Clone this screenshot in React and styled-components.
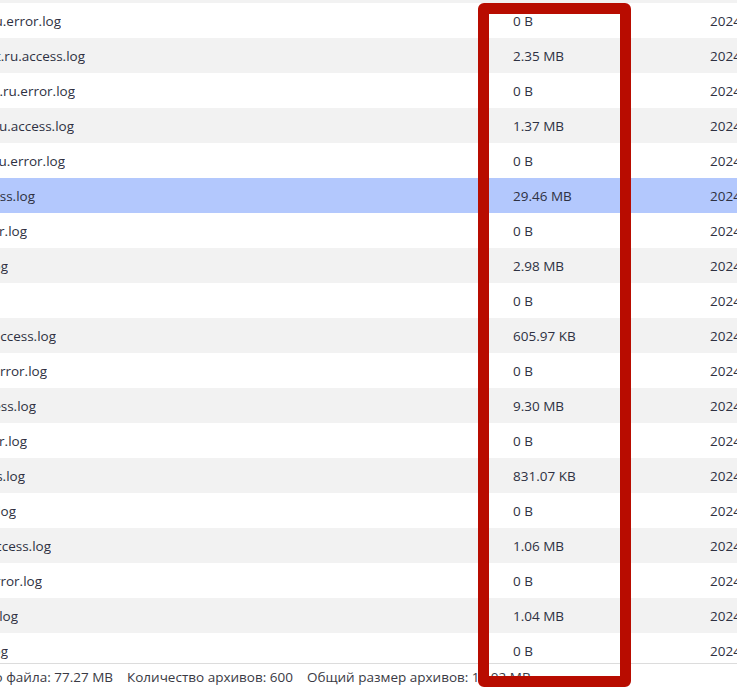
import { useEffect, useRef } from 'react';
import styled, { createGlobalStyle } from 'styled-components';

const logs = [
  { name: 'old-mirror.ru.access.log', end: 0, size: '1.12 MB', date: '2024-05-12 00:00' },
  { name: 'shop-mail.ru.error.log', end: 61, size: '0 B', date: '2024-05-12 00:00' },
  { name: 'market.ru.access.log', end: 85, size: '2.35 MB', date: '2024-05-12 00:00' },
  { name: 'market.ru.error.log', end: 75, size: '0 B', date: '2024-05-12 00:00' },
  { name: 'portal-edu.ru.access.log', end: 74, size: '1.37 MB', date: '2024-05-12 00:00' },
  { name: 'portal-edu.ru.error.log', end: 65, size: '0 B', date: '2024-05-12 00:00' },
  { name: 'access.log', end: 35, size: '29.46 MB', date: '2024-05-12 00:00', selected: true },
  { name: 'error.log', end: 27, size: '0 B', date: '2024-05-12 00:00' },
  { name: 'xferlog', end: 8, size: '2.98 MB', date: '2024-05-12 00:00' },
  { name: 'mail', end: 0, size: '0 B', date: '2024-05-12 00:00' },
  { name: 'forum.ru.access.log', end: 56, size: '605.97 KB', date: '2024-05-12 00:00' },
  { name: 'forum.ru.error.log', end: 47, size: '0 B', date: '2024-05-12 00:00' },
  { name: 'api.access.log', end: 36, size: '9.30 MB', date: '2024-05-12 00:00' },
  { name: 'api.error.log', end: 27, size: '0 B', date: '2024-05-12 00:00' },
  { name: 'cdn.access.log', end: 25, size: '831.07 KB', date: '2024-05-12 00:00' },
  { name: 'cdn.error.log', end: 16, size: '0 B', date: '2024-05-12 00:00' },
  { name: 'blog.ru.access.log', end: 51, size: '1.06 MB', date: '2024-05-12 00:00' },
  { name: 'blog.ru.error.log', end: 42, size: '0 B', date: '2024-05-12 00:00' },
  { name: 'ssl.access.log', end: 18, size: '1.04 MB', date: '2024-05-12 00:00' },
  { name: 'ssl.error.log', end: 8, size: '0 B', date: '2024-05-12 00:00' },
];

const GlobalStyle = createGlobalStyle`
  html, body {
    margin: 0;
    padding: 0;
    background: #ffffff;
  }
  body {
    font-family: 'Open Sans', 'Noto Sans', sans-serif;
    font-size: 13.5px;
    color: #2e3142;
  }
`;

const Page = styled.div`
  position: relative;
  height: 692px;
  display: flex;
  flex-direction: column;
  overflow: hidden;
`;

const Viewport = styled.div`
  height: 663px;
  flex: none;
  overflow: hidden;
`;

const Row = styled.div`
  display: grid;
  grid-template-columns: 497px 197px 1fr;
  height: 35px;
  align-items: center;
  background: ${({ $selected, $odd }) =>
    $selected ? '#b3c8fd' : $odd ? '#f2f2f2' : '#ffffff'};
`;

const Cell = styled.div`
  padding-left: 16px;
  white-space: nowrap;
  overflow: hidden;
`;

// the list is scrolled sideways, only the end of the name is visible
const NameClip = styled.div`
  width: ${({ $end }) => $end}px;
  direction: rtl;
  overflow: hidden;
  white-space: nowrap;
`;

const NameText = styled.span`
  display: inline-block;
  direction: ltr;
`;

const StatusBar = styled.div`
  flex: 1;
  display: flex;
  align-items: center;
  gap: 14px;
  border-top: 1px solid #dcdcdc;
  color: #3a3a44;
  white-space: nowrap;
  padding-bottom: 2px;
`;

const Marker = styled.div`
  position: absolute;
  left: 478px;
  top: 3px;
  width: 153px;
  height: 684px;
  box-sizing: border-box;
  border: 11px solid #b80c00;
  border-radius: 6px;
  pointer-events: none;
`;

const Tail = ({ end, children }) => (
  <NameClip $end={end}>
    <NameText>{children}</NameText>
  </NameClip>
);

const App = () => {
  const viewRef = useRef(null);

  useEffect(() => {
    if (viewRef.current) viewRef.current.scrollTop = 32;
  }, []);

  return (
    <>
      <GlobalStyle />
      <Page>
        <Viewport ref={viewRef}>
          {logs.map((log, i) => (
            <Row key={log.name} $odd={i % 2 === 0} $selected={log.selected}>
              <Tail end={log.end}>{log.name}</Tail>
              <Cell>{log.size}</Cell>
              <Cell>{log.date}</Cell>
            </Row>
          ))}
        </Viewport>
        <StatusBar>
          <Tail end={113}>Размер текущего файла: 77.27 MB</Tail>
          <span>Количество архивов: 600</span>
          <span>Общий размер архивов: 10.02 MB</span>
        </StatusBar>
        <Marker />
      </Page>
    </>
  );
};

export default App;
